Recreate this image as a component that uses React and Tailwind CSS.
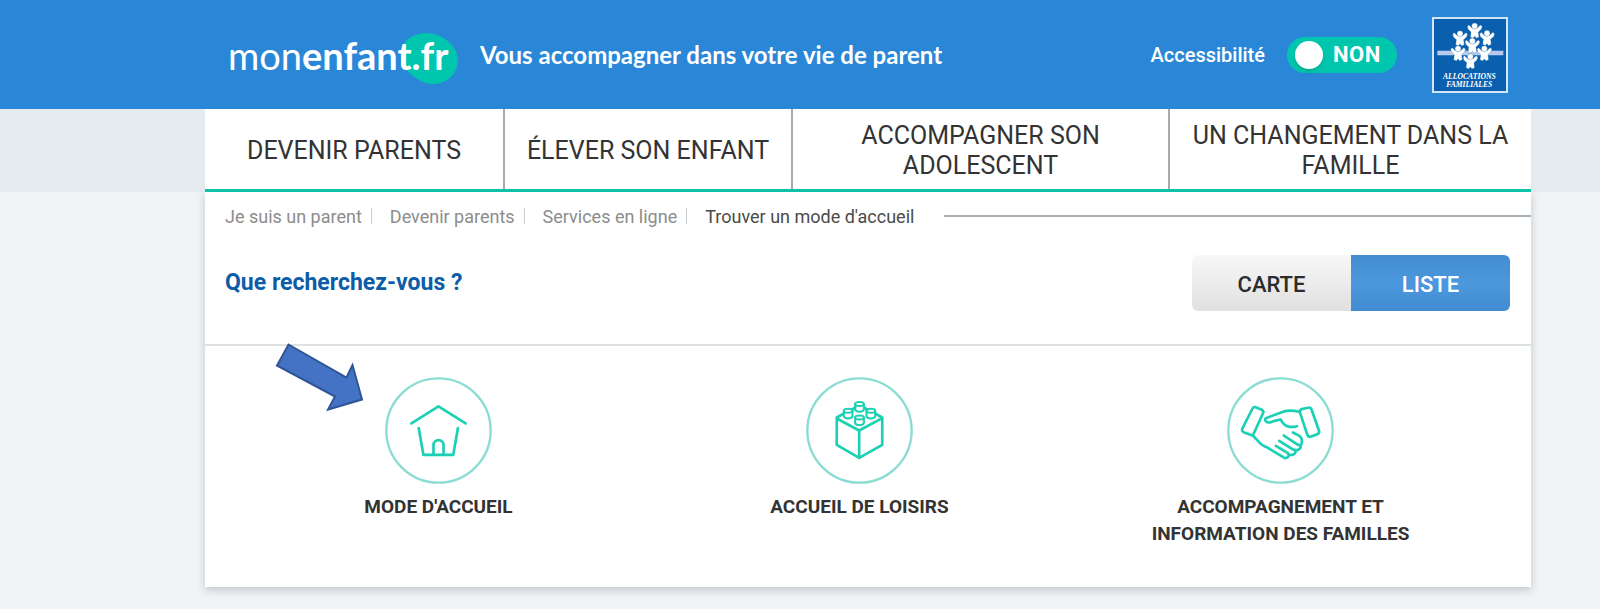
import React from "react";

const navItems = [
	"Devenir parents",
	"Élever son enfant",
	"Accompagner son adolescent",
	"Un changement dans la famille",
];

const breadcrumbs = ["Je suis un parent", "Devenir parents", "Services en ligne"];

const services = [
	{ label: "Mode d'accueil", Icon: HouseIcon, highlighted: true },
	{ label: "Accueil de loisirs", Icon: BrickIcon },
	{ label: "Accompagnement et information des familles", Icon: HandshakeIcon },
];

function App() {
	const [accessible, setAccessible] = React.useState(false);
	const [view, setView] = React.useState("liste");

	return (
		<div className="min-h-screen bg-[#f1f3f5] font-[Roboto,sans-serif] text-[#333333]">
			<header className="bg-[#2a87d8] pl-[205px] pr-[69px]">
				<div className="flex h-[109px] items-center px-[23px]">
					<SiteLogo />
					<p className="ml-[22px] font-[Lato,sans-serif] text-[24px] font-bold leading-8 text-white whitespace-nowrap">
						Vous accompagner dans votre vie de parent
					</p>
					<label className="ml-auto flex cursor-pointer items-center gap-[22px] text-[20px] font-medium text-white">
						Accessibilité
						<input
							type="checkbox"
							className="peer sr-only"
							checked={accessible}
							onChange={(e) => setAccessible(e.target.checked)}
						/>
						<span className="flex h-9 w-[110px] items-center gap-[10px] rounded-full bg-[#00c6ad] px-2 text-[22px] font-bold tracking-wide">
							<span className="size-7 rounded-full bg-white shadow-md" />
							{accessible ? "OUI" : "NON"}
						</span>
					</label>
					<CafLogo />
				</div>
			</header>

			<nav className="bg-[#e5eaee] pl-[205px] pr-[69px]">
				<ul className="grid h-[83px] grid-cols-[300fr_288fr_377fr_361fr] border-b-[3px] border-[#0cc7ad] bg-white">
					{navItems.map((item) => (
						<li key={item} className="border-r-2 border-[#aaaaaa] last:border-r-0">
							<a
								href="#"
								className="flex h-full items-center justify-center px-5 pt-[3px] text-center text-[25px] leading-[30px] uppercase"
							>
								{item}
							</a>
						</li>
					))}
				</ul>
			</nav>

			<div className="pb-[22px] pl-[205px] pr-[69px]">
				<main className="bg-white pb-10 shadow-[0_3px_8px_rgba(80,95,110,0.3)]">
					<div className="flex h-12 items-center pl-5 text-[18px]">
						{breadcrumbs.map((crumb) => (
							<React.Fragment key={crumb}>
								<a href="#" className="text-[#8c8c8c]">
									{crumb}
								</a>
								<span className="ml-[9px] mr-[18px] h-4 w-px bg-[#cfcfcf]" />
							</React.Fragment>
						))}
						<span className="text-[#4a4a4a]">Trouver un mode d'accueil</span>
						<span className="ml-[30px] h-[2px] flex-1 bg-[#a9b1b5]" />
					</div>

					<div className="flex items-start justify-between border-b-2 border-[#dde1e1] pb-[33px] pl-5 pr-[21px] pt-[15px]">
						<h1 className="pt-3 text-[23px] font-bold leading-8 text-[#0c5ca8]">
							Que recherchez-vous ?
						</h1>
						<div className="flex h-14 w-[318px] overflow-hidden rounded-md text-[22px] font-medium">
							<ViewButton active={view === "carte"} onClick={() => setView("carte")}>
								Carte
							</ViewButton>
							<ViewButton active={view === "liste"} onClick={() => setView("liste")}>
								Liste
							</ViewButton>
						</div>
					</div>

					<div className="grid grid-cols-3 pl-[23px] pr-10 pt-[31px]">
						{services.map(({ label, Icon, highlighted }) => (
							<a key={label} href="#" className="relative flex flex-col items-center">
								{highlighted && <Arrow />}
								<Icon />
								<span className="mt-[9px] w-[280px] text-center text-[19px] font-bold leading-[27px] uppercase">
									{label}
								</span>
							</a>
						))}
					</div>
				</main>
			</div>
		</div>
	);
}

function ViewButton({ active, onClick, children }) {
	return (
		<button
			type="button"
			onClick={onClick}
			className={
				active
					? "flex-1 bg-linear-to-b from-[#428bd0] via-[#4c98de] to-[#428bd0] pt-[2px] uppercase text-white"
					: "flex-1 bg-linear-to-b from-[#f8f8f8] to-[#e0e0e0] pt-[2px] uppercase text-[#2b2b2b]"
			}
		>
			{children}
		</button>
	);
}

function SiteLogo() {
	return (
		<a href="#" className="relative block w-[230px] whitespace-nowrap font-[Lato,sans-serif] text-white">
			<svg className="absolute top-0 right-0" width="58" height="52" viewBox="0 0 58 52">
				<path
					d="M1 18C2 8 12 1 25 0C43 0 58 13 58 28C57 42 46 52 31 51C16 49 0 36 1 18Z"
					fill="#00c6ad"
				/>
			</svg>
			<span className="relative text-[38px] leading-[44px]">
				mon<span className="font-bold">enfant.fr</span>
			</span>
		</a>
	);
}

// Small figure with raised arms, repeated in the emblem
function Figure({ x, y }) {
	return (
		<g transform={`translate(${x} ${y})`}>
			<path d="M-22 -14L-17 -18L-8 -9H8L17 -18L23 -14L20 -5L11 3L13 18L5 22L0 16L-5 22L-13 18L-11 3L-20 -5Z" />
			<circle cx="0" cy="-15" r="9" />
		</g>
	);
}

function CafLogo() {
	return (
		<svg className="ml-[35px] shrink-0" width="76" height="76" viewBox="20 20 228 228">
			<rect x="23" y="23" width="222" height="222" fill="#0a60ae" stroke="#d3e6f7" strokeWidth="6" />
			<path d="M36 128H234" stroke="#b9c9ee" strokeWidth="13" />
			<g fill="#fff" stroke="#0a60ae" strokeWidth="1">
				<Figure x={148} y={62} />
				<Figure x={104} y={85} />
				<Figure x={185} y={84} />
				<Figure x={98} y={130} />
				<Figure x={177} y={130} />
				<Figure x={141} y={107} />
				<Figure x={135} y={154} />
			</g>
			<g
				fill="#fff"
				fontFamily="Liberation Serif, serif"
				fontStyle="italic"
				fontWeight="bold"
				fontSize="23"
				textAnchor="middle"
			>
				<text x="132" y="206">ALLOCATIONS</text>
				<text x="132" y="229">FAMILIALES</text>
			</g>
		</svg>
	);
}

function Arrow() {
	return (
		<svg className="absolute left-[47px] -top-9" width="90" height="72" viewBox="275 342 90 72">
			<path
				d="M288.5 345.5L346.5 378.5L352.5 366L362 400.5L328 410.5L335 397.5L277 366.5Z"
				fill="#4472c4"
				stroke="#2f5597"
				strokeWidth="2"
			/>
		</svg>
	);
}

function CircleIcon({ children }) {
	return (
		<svg
			width="107"
			height="107"
			viewBox="0 0 320 320"
			fill="none"
			stroke="#1bd0b3"
			strokeWidth="8"
			strokeLinecap="round"
			strokeLinejoin="round"
		>
			<circle cx="160" cy="160" r="156" stroke="#8bdcd3" strokeWidth="7" />
			{children}
		</svg>
	);
}

function HouseIcon() {
	return (
		<CircleIcon>
			<path d="M79 139L160 88L241 139" />
			<path d="M101 153L115 233H204L218 153" />
			<path d="M145 232V204C145 184 175 184 175 204V232" />
		</CircleIcon>
	);
}

function BrickIcon() {
	return (
		<CircleIcon>
			<path d="M92 124V203L159 242L228 203V123L159 160Z" />
			<path d="M159 160V242" />
			<path d="M92 121L112 110M138 97L147 92M174 92L183 97M208 110L228 121" />
			<g strokeWidth="6">
				<Stud x={160} y={81} />
				<Stud x={126} y={101} />
				<Stud x={194} y={101} />
				<Stud x={160} y={121} />
			</g>
		</CircleIcon>
	);
}

function Stud({ x, y }) {
	return (
		<g transform={`translate(${x} ${y})`}>
			<ellipse cx="0" cy="0" rx="13" ry="6" />
			<path d="M-13 0V16C-12 25 12 25 13 16V0" />
		</g>
	);
}

function HandshakeIcon() {
	return (
		<CircleIcon>
			<path d="M76 95C79 89 85 89 89 92L104 98C109 101 110 105 107 110L80 169C77 175 74 175 68 172L50 165C44 162 44 158 47 152Z" />
			<path d="M218 106C217 101 218 98 224 96L242 92C248 90 251 92 253 98L275 160C277 166 275 169 270 171L252 178C246 180 242 178 240 172Z" />
			<path d="M218 104C202 101 187 98 174 102L122 121C114 123 112 127 116 132C121 138 131 136 139 132L160 127C166 139 172 148 188 149C196 150 203 149 209 147" />
			<path d="M77 175C86 183 92 192 101 200C106 205 111 206 117 209L167 239C175 246 185 241 185 232" />
			<path d="M146 206L180 226C184 230 186 235 196 233C203 231 206 227 205 219" />
			<path d="M156 191L198 217C208 221 221 218 221 205" />
			<path d="M170 175L209 201C220 207 225 202 224 194C225 179 217 175 209 172L197 166" />
		</CircleIcon>
	);
}

export default App;
